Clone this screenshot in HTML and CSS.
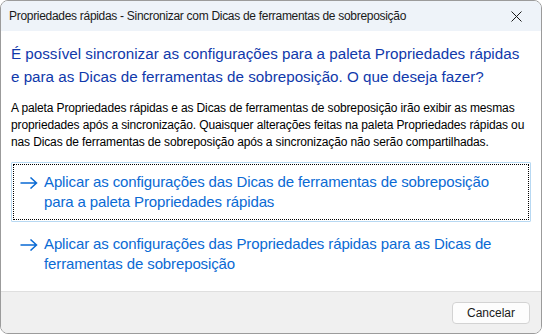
FILE: index.html
```html
<!DOCTYPE html>
<html lang="pt">
<head>
<meta charset="utf-8">
<link rel="stylesheet" href="styles.css">
</head>
<body>
<div class="window">
  <div class="titlebar">
    <span class="title">Propriedades rápidas - Sincronizar com Dicas de ferramentas de sobreposição</span>
    <span class="close"><svg width="11" height="11" viewBox="0 0 11 11"><path d="M0.5 0.5 L10.5 10.5 M10.5 0.5 L0.5 10.5" stroke="#1a1a1a" stroke-width="1" fill="none"/></svg></span>
  </div>
  <div class="content">
    <div class="main">É possível sincronizar as configurações para a paleta Propriedades rápidas<br>e para as Dicas de ferramentas de sobreposição. O que deseja fazer?</div>
    <div class="desc">A paleta Propriedades rápidas e as Dicas de ferramentas de sobreposição irão exibir as mesmas<br>propriedades após a sincronização. Quaisquer alterações feitas na paleta Propriedades rápidas ou<br>nas Dicas de ferramentas de sobreposição após a sincronização não serão compartilhadas.</div>
    <div class="links">
      <div class="cmd focused">
        <svg class="arrow" width="18" height="12" viewBox="0 0 18 12"><path d="M0.5 6 H16.5 M10.5 0.5 L16.5 6 L10.5 11.5" stroke="#0a6ad4" stroke-width="1.5" fill="none"/></svg>
        <span class="cmd-text">Aplicar as configurações das Dicas de ferramentas de sobreposição<br>para a paleta Propriedades rápidas</span>
      </div>
      <div class="cmd">
        <svg class="arrow" width="18" height="12" viewBox="0 0 18 12"><path d="M0.5 6 H16.5 M10.5 0.5 L16.5 6 L10.5 11.5" stroke="#0a6ad4" stroke-width="1.5" fill="none"/></svg>
        <span class="cmd-text">Aplicar as configurações das Propriedades rápidas para as Dicas de<br>ferramentas de sobreposição</span>
      </div>
    </div>
  </div>
  <div class="footer">
    <div class="cancel">Cancelar</div>
  </div>
</div>
</body>
</html>
```
FILE: styles.css
```css
html, body {
  margin: 0;
  padding: 0;
  background: #ffffff;
}
body {
  font-family: "Liberation Sans", Arial, sans-serif;
}
.window {
  box-sizing: border-box;
  width: 542px;
  height: 334px;
  border: 1px solid #9b9b9b;
  border-radius: 8px;
  overflow: hidden;
  display: flex;
  flex-direction: column;
  background: #ffffff;
}
.titlebar {
  height: 30px;
  flex: none;
  background: #eef3f9;
  display: flex;
  align-items: center;
  justify-content: space-between;
  padding-left: 8px;
}
.title {
  font-size: 12px;
  letter-spacing: -0.3px;
  color: #1a1a1a;
  white-space: nowrap;
}
.close {
  width: 46px;
  height: 30px;
  display: flex;
  align-items: center;
  justify-content: center;
  margin-right: 2px;
}
.content {
  flex: 1;
  padding: 11px 10px 0 10px;
}
.main {
  font-size: 15.2px;
  line-height: 23px;
  color: #1039ab;
  white-space: nowrap;
}
.desc {
  margin-top: 12px;
  font-size: 12px;
  letter-spacing: -0.13px;
  line-height: 17px;
  color: #000;
  white-space: nowrap;
}
.links {
  margin-top: 11px;
  display: flex;
  flex-direction: column;
  gap: 2px;
}
.cmd {
  position: relative;
  display: flex;
  align-items: flex-start;
  padding: 9px 8px 9px 8px;
  border: 1px solid transparent;
  border-radius: 1px;
}
.cmd.focused {
  border-color: #b8d9f3;
}
.cmd.focused::after {
  content: "";
  position: absolute;
  inset: 1px;
  border: 1px dotted #000;
}
.arrow {
  flex: none;
  margin-top: 5px;
  margin-right: 6px;
}
.cmd-text {
  font-size: 15px;
  letter-spacing: -0.12px;
  line-height: 20px;
  color: #0a6ad4;
  white-space: nowrap;
}
.footer {
  flex: none;
  height: 41px;
  background: #f0f0f0;
  border-top: 1px solid #dfdfdf;
  display: flex;
  align-items: center;
  justify-content: flex-end;
  padding-right: 11px;
}
.cancel {
  box-sizing: border-box;
  width: 78px;
  height: 22px;
  background: #fdfdfd;
  border: 1px solid #d3d3d3;
  border-radius: 4px;
  font-size: 12px;
  color: #1a1a1a;
  display: flex;
  align-items: center;
  justify-content: center;
}
```
